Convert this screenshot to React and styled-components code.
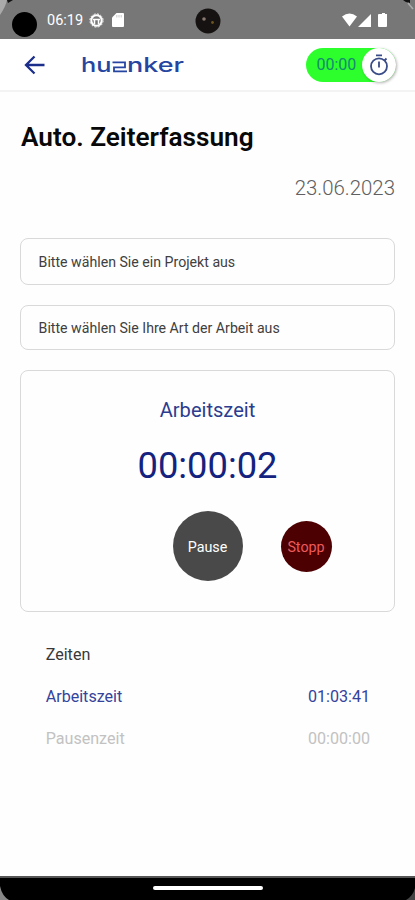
import React from "react";
import styled, { createGlobalStyle } from "styled-components";

const NAVY = "#14237f";

const GlobalStyle = createGlobalStyle`
  *, *::before, *::after { box-sizing: border-box; }
  body { margin: 0; background: #fff; font-family: Roboto, "Liberation Sans", sans-serif; }
  h1, h2, p { margin: 0; }
`;

const Phone = styled.div`
  display: flex;
  flex-direction: column;
  width: 415px;
  height: 900px;
  overflow: hidden;
  background: #fefefe;
`;

const StatusBar = styled.header`
  position: relative;
  display: flex;
  align-items: center;
  height: 39px;
  flex: none;
  padding: 1px 27px 0 12px;
  background: #777;
  color: #fff;
`;

const Corner = styled.svg`
  position: absolute;
  top: ${(p) => (p.$bottom ? "auto" : 0)};
  bottom: ${(p) => (p.$bottom ? 0 : "auto")};
  left: ${(p) => (p.$right ? "auto" : 0)};
  right: ${(p) => (p.$right ? 0 : "auto")};
`;

const Dot = styled.span`
  width: 25px;
  height: 25px;
  margin-top: 8px;
  border-radius: 50%;
  background: #000;
`;

const Clock = styled.span`
  margin: 2px 6px 0 10px;
  font-size: 14.5px;
  line-height: 20px;
  width: 36px;
  white-space: nowrap;
`;

const StatusIcons = styled.span`
  display: flex;
  align-items: center;
  gap: ${(p) => p.$gap}px;
  margin-left: ${(p) => (p.$end ? "auto" : 0)};
`;

const Camera = styled.svg`
  position: absolute;
  left: 195px;
  top: 8px;
`;

const AppBar = styled.nav`
  display: flex;
  align-items: center;
  height: 53px;
  flex: none;
  padding: 0 19px 0 24px;
  border-bottom: 2px solid #f3f3f3;
  background: #fff;
`;

const BackButton = styled.button`
  display: flex;
  width: 58px;
  padding: 0;
  border: 0;
  background: none;
`;

const TimerPill = styled.div`
  display: flex;
  align-items: center;
  justify-content: space-between;
  width: 90px;
  height: 34px;
  margin-left: auto;
  padding-left: 10.5px;
  border-radius: 17px;
  background: #2cff2c;
  color: #168a70;
  font-size: 16px;
`;

const TimerKnob = styled.span`
  display: flex;
  align-items: center;
  justify-content: center;
  width: 34px;
  height: 34px;
  border-radius: 50%;
  background: #fff;
  box-shadow: 1px 1px 3px rgba(0, 0, 0, 0.3);
`;

const Main = styled.main`
  display: flex;
  flex-direction: column;
  flex: 1;
  padding: 30px 20px 0;
`;

const Title = styled.h1`
  font-size: 26.2px;
  line-height: 30px;
  font-weight: 600;
  color: #080808;
  padding-left: 1px;
`;

const DateText = styled.p`
  margin-top: 24px;
  text-align: right;
  font-size: 20.4px;
  line-height: 24px;
  font-weight: 300;
  color: #606060;
`;

const Fields = styled.div`
  display: flex;
  flex-direction: column;
  gap: 20px;
  margin-top: 38px;
`;

const Field = styled.div`
  display: flex;
  align-items: center;
  height: ${(p) => p.$height}px;
  padding: 1px 18px 0 17.6px;
  border: 1.5px solid #d9d9d9;
  border-radius: 8px;
  font-size: 14.15px;
  color: #404040;
`;

const Card = styled.section`
  display: flex;
  flex-direction: column;
  align-items: center;
  height: 242px;
  margin-top: 20px;
  padding-top: 26px;
  border: 1.5px solid #d9d9d9;
  border-radius: 8px;
  color: ${NAVY};
`;

const CardTitle = styled.h2`
  font-size: 20.1px;
  line-height: 26px;
  font-weight: 400;
  color: #2c3c8f;
`;

const Counter = styled.p`
  margin-top: 21px;
  font-size: 36.3px;
  line-height: 44px;
  font-weight: 400;
`;

const Actions = styled.div`
  display: grid;
  grid-template-columns: 70px 51px;
  align-items: center;
  gap: 38px;
  margin: 23px 0 0 89px;
`;

const RoundButton = styled.button`
  display: flex;
  align-items: center;
  justify-content: center;
  width: ${(p) => p.$size}px;
  height: ${(p) => p.$size}px;
  padding: 1px 0 0;
  border: 0;
  border-radius: 50%;
  background: ${(p) => p.$bg};
  color: ${(p) => p.$fg};
  font-family: inherit;
  font-size: 14.3px;
`;

const Times = styled.section`
  display: flex;
  flex-direction: column;
  padding: 21px 25px 0 25.7px;
`;

const TimeRow = styled.div`
  display: flex;
  align-items: center;
  justify-content: space-between;
  height: 42px;
  font-size: 16.1px;
  color: ${(p) => p.$color};
`;

const HomeBar = styled.footer`
  position: relative;
  display: flex;
  justify-content: center;
  height: 24px;
  flex: none;
  padding-top: 8px;
  border-top: 2px solid #555;
  background: #000;
`;

const HomeHandle = styled.span`
  width: 110px;
  height: 4px;
  border-radius: 2px;
  background: #fff;
`;

const times = [
  { label: "Zeiten", value: "", color: "#383838" },
  { label: "Arbeitszeit", value: "01:03:41", color: "#34439c" },
  { label: "Pausenzeit", value: "00:00:00", color: "#c2c2c2" },
];

function Logo() {
  return (
    <svg width="108" height="32" viewBox="0 0 108 32" role="img" aria-label="huonker">
      <g fill="#2545a0" fontFamily="Inter, sans-serif" fontSize="20" fontWeight="500">
        <text x="-1" y="23.4" textLength="30.5" lengthAdjust="spacingAndGlyphs">hu</text>
        <text x="45" y="23.4" textLength="57" lengthAdjust="spacingAndGlyphs">nker</text>
      </g>
      <path d="M30.5 13.4H43V18.3H32V22.4H45" fill="none" stroke="#2545a0" strokeWidth="1.8" />
    </svg>
  );
}

export default function App() {
  return (
    <>
      <GlobalStyle />
      <Phone>
        <StatusBar>
          <Corner width="14" height="16">
            <path d="M0 0H7Q6 6 0 15Z" fill="#aaa" />
            <path d="M7 0H13L8 3Z" fill="#111" />
          </Corner>
          <Corner $right width="14" height="12">
            <path d="M2 0H9V3Q5 3 2 0Z" fill="#111" />
            <path d="M7 3L12 9" stroke="#aaa" strokeWidth="1.6" />
          </Corner>
          <Dot />
          <Clock>06:19</Clock>
          <StatusIcons $gap={8}>
            <svg width="15" height="15" viewBox="0 0 15 15" fill="none" stroke="#fff">
              <circle cx="7.5" cy="7.5" r="5.2" strokeWidth="2" />
              <circle cx="7.5" cy="7.5" r="6.6" strokeWidth="1" strokeDasharray="2 1.5" />
              <path d="M4 6.5h7M5.5 7v4M9.5 7v4" strokeWidth="1.5" />
            </svg>
            <svg width="12" height="14" viewBox="0 0 12 14">
              <path d="M4.5 0H11Q12 0 12 1V13Q12 14 11 14H1Q0 14 0 13V4.5Z" fill="#fff" />
              <path d="M4.8 2v2.5M7 2v2.5M9.2 2v2.5" stroke="#bbb" strokeWidth=".8" />
            </svg>
          </StatusIcons>
          <Camera width="26" height="26" viewBox="0 0 26 26">
            <circle cx="13" cy="13" r="12.5" fill="#151211" />
            <circle cx="9" cy="11" r="1.8" fill="#89786f" />
            <circle cx="17.5" cy="14.5" r="1.4" fill="#6c5420" />
          </Camera>
          <StatusIcons $end $gap={0}>
            <svg width="46" height="15" viewBox="0 0 46 15" fill="#fff">
              <path d="M0 3.5Q7.5-2.3 15 3.5L7.5 13.5Z" />
              <path d="M29 1V14H16Z" />
              <path d="M37 1h3V0h3V1h2V13q0 1-1 1h-7q-1 0-1-1V2q0-1 1-1Z" />
            </svg>
          </StatusIcons>
        </StatusBar>
        <AppBar>
          <BackButton aria-label="Zurück">
            <svg width="22" height="20" viewBox="0 0 22 20" fill="none" stroke="#1c2e8c" strokeWidth="2.3">
              <path d="M20.5 10H2.5M10.5 1.5L2 10l8.5 8.5" />
            </svg>
          </BackButton>
          <Logo />
          <TimerPill>
            <span>00:00</span>
            <TimerKnob>
              <svg width="20" height="22" viewBox="0 0 20 22" fill="none" stroke="#3a4c88" strokeWidth="1.8">
                <circle cx="10" cy="12.3" r="8" />
                <path d="M7 1.4h6M10 7.5v6M15.5 6.5l2-2" />
              </svg>
            </TimerKnob>
          </TimerPill>
        </AppBar>
        <Main>
          <Title>Auto. Zeiterfassung</Title>
          <DateText>23.06.2023</DateText>
          <Fields>
            <Field $height={46.5}>Bitte wählen Sie ein Projekt aus</Field>
            <Field $height={45.5}>Bitte wählen Sie Ihre Art der Arbeit aus</Field>
          </Fields>
          <Card>
            <CardTitle>Arbeitszeit</CardTitle>
            <Counter>00:00:02</Counter>
            <Actions>
              <RoundButton $size={70} $bg="#494949" $fg="#fff">Pause</RoundButton>
              <RoundButton $size={51} $bg="#4c0002" $fg="#ee5a5c">Stopp</RoundButton>
            </Actions>
          </Card>
          <Times>
            {times.map((t) => (
              <TimeRow key={t.label} $color={t.color}>
                <span>{t.label}</span>
                <span>{t.value}</span>
              </TimeRow>
            ))}
          </Times>
        </Main>
        <HomeBar>
          <Corner $bottom width="9" height="14"><path d="M0 0Q2 10 9 14H0Z" fill="#888" /></Corner>
          <HomeHandle />
          <Corner $bottom $right width="9" height="14"><path d="M9 2Q7 10 0 14H9Z" fill="#444" /></Corner>
        </HomeBar>
      </Phone>
    </>
  );
}
